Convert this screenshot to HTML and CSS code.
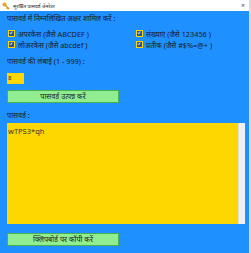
FILE: index.html
```html
<!DOCTYPE html>
<html lang="hi">
<head>
    <meta charset="UTF-8">
    <title>सुरक्षित पासवर्ड जेनरेटर</title>
    <link rel="stylesheet" href="styles.css">
</head>
<body>
    <div class="window">
        <div class="titlebar">
            <svg class="key-icon" width="8" height="8" viewBox="0 0 8 8">
                <circle cx="2.5" cy="2.5" r="2" fill="#f0a020"/>
                <path d="M3.5 3.5 L7 7 M5.5 5.5 L4.5 6.5 M6.5 6.5 L5.7 7.3" stroke="#e08a10" stroke-width="1.2"/>
            </svg>
            <span class="title">सुरक्षित पासवर्ड जेनरेटर</span>
            <span class="close">&times;</span>
        </div>
        <div class="content">
            <div class="label">पासवर्ड में निम्नलिखित अक्षर शामिल करें :</div>
            <div class="options">
                <div class="option"><span class="check"></span>अपरकेस (जैसे ABCDEF )</div>
                <div class="option"><span class="check"></span>संख्याएं (जैसे 123456 )</div>
                <div class="option"><span class="check"></span>लोअरकेस (जैसे abcdef )</div>
                <div class="option"><span class="check"></span>प्रतीक (जैसे #$%=@+ )</div>
            </div>
            <div class="label len-label">पासवर्ड की लंबाई (1 - 999) :</div>
            <div class="len-input">8</div>
            <button class="green-button">पासवर्ड उत्पन्न करें</button>
            <div class="label pw-label">पासवर्ड :</div>
            <div class="output">
                <div class="output-text">wTPS3*qh</div>
                <div class="scrollbar"></div>
            </div>
            <button class="green-button copy-button">क्लिपबोर्ड पर कॉपी करें</button>
        </div>
    </div>
</body>
</html>
```
FILE: styles.css
```css
body {
    margin: 0;
    padding: 0;
    font-family: "Noto Sans", "Noto Sans Devanagari", "DejaVu Sans", sans-serif;
}
.window {
    width: 251px;
    height: 253px;
    background-color: #1e90ff;
    border-right: 2px solid #d8d8d8;
    box-sizing: border-box;
    overflow: hidden;
}
.titlebar {
    height: 11px;
    background-color: #fff;
    display: flex;
    align-items: center;
    padding-left: 2px;
    font-size: 5px;
    color: #222;
}
.key-icon {
    margin-right: 3px;
}
.title {
    flex: 1;
}
.close {
    font-size: 7px;
    color: #555;
    margin-right: 4px;
}
.content {
    padding: 1px 0 0 7px;
    font-size: 7.3px;
    color: #1a1a1a;
}
.label {
    height: 13px;
    line-height: 13px;
}
.options {
    display: grid;
    grid-template-columns: 128px 1fr;
    margin-top: 3px;
}
.option {
    display: flex;
    align-items: center;
    height: 11px;
}
.check {
    width: 5px;
    height: 5px;
    border: 1px solid #ffd700;
    background-color: #2050a0;
    margin: 0 3px 0 1px;
    position: relative;
}
.check::after {
    content: "";
    position: absolute;
    left: 1px;
    top: 0;
    width: 1px;
    height: 2px;
    border-right: 1px solid #ccc;
    border-bottom: 1px solid #ccc;
    transform: rotate(40deg);
}
.len-label {
    margin-top: 5px;
}
.len-input {
    width: 17px;
    height: 11px;
    line-height: 11px;
    background-color: #ffd700;
    font-size: 6px;
    padding-left: 1px;
    box-sizing: border-box;
    margin-top: 5px;
    color: #333;
}
.green-button {
    display: block;
    width: 112px;
    height: 13px;
    margin-top: 6px;
    background-color: #90ee90;
    border: 1px solid #4caf50;
    font-family: inherit;
    font-size: 7.3px;
    color: #222;
    padding: 0;
    line-height: 11px;
}
.pw-label {
    margin-top: 6px;
}
.output {
    display: flex;
    width: 238px;
    height: 101px;
    margin-top: 1px;
}
.output-text {
    flex: 1;
    background-color: #ffd700;
    font-size: 7.5px;
    padding: 3px 1px;
    color: #333;
}
.scrollbar {
    width: 6px;
    background-color: #f0f0f0;
    border-left: 1px solid #ddd;
}
.copy-button {
    margin-top: 9px;
}
```
